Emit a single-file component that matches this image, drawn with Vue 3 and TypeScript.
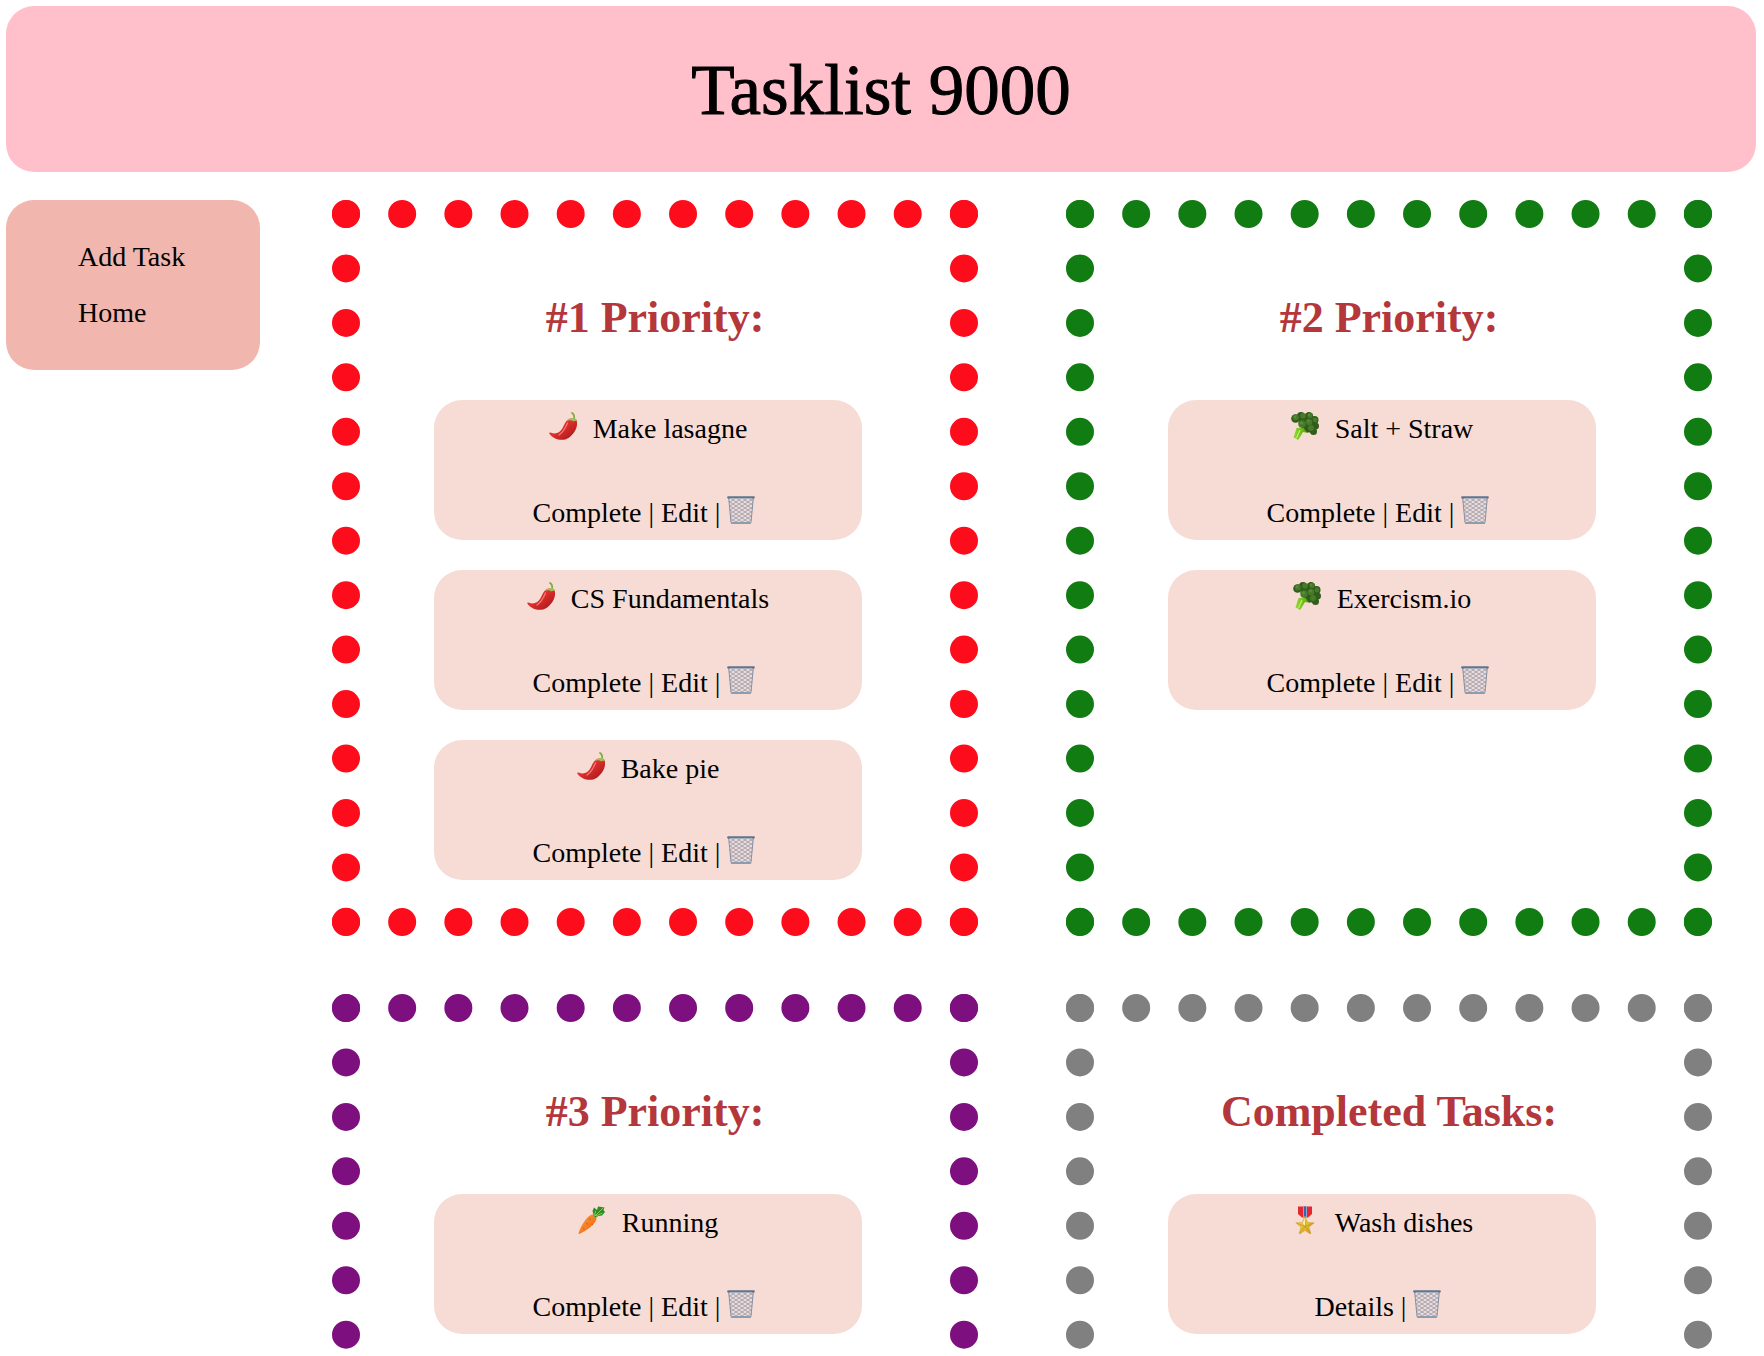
<script setup lang="ts">
interface Task {
  id: number
  name: string
}

interface Section {
  key: string
  title: string
  icon: string
  actions: string[]
  tasks: Task[]
}

const sections: Section[] = [
  {
    key: 'first',
    title: '#1 Priority:',
    icon: 'pepper',
    actions: ['Complete', 'Edit'],
    tasks: [
      { id: 1, name: 'Make lasagne' },
      { id: 2, name: 'CS Fundamentals' },
      { id: 3, name: 'Bake pie' },
    ],
  },
  {
    key: 'second',
    title: '#2 Priority:',
    icon: 'broccoli',
    actions: ['Complete', 'Edit'],
    tasks: [
      { id: 4, name: 'Salt + Straw' },
      { id: 5, name: 'Exercism.io' },
    ],
  },
  {
    key: 'third',
    title: '#3 Priority:',
    icon: 'carrot',
    actions: ['Complete', 'Edit'],
    tasks: [{ id: 6, name: 'Running' }],
  },
  {
    key: 'completed',
    title: 'Completed Tasks:',
    icon: 'medal',
    actions: ['Details'],
    tasks: [{ id: 7, name: 'Wash dishes' }],
  },
]
</script>

<template>
  <div class="page">
    <svg class="sprite" width="0" height="0" aria-hidden="true">
      <defs>
        <linearGradient id="pepper-skin" x1="0" y1="0" x2="1" y2="1">
          <stop offset="0" stop-color="#f0524a" />
          <stop offset="0.5" stop-color="#d92b2b" />
          <stop offset="1" stop-color="#9c1518" />
        </linearGradient>
        <linearGradient id="carrot-skin" x1="0" y1="0" x2="1" y2="1">
          <stop offset="0" stop-color="#ff9a3c" />
          <stop offset="0.6" stop-color="#f47a20" />
          <stop offset="1" stop-color="#d95a10" />
        </linearGradient>
        <linearGradient id="stalk" x1="0" y1="0" x2="1" y2="0">
          <stop offset="0" stop-color="#8fdc2e" />
          <stop offset="1" stop-color="#4f9c12" />
        </linearGradient>
        <linearGradient id="gold" x1="0" y1="0" x2="1" y2="1">
          <stop offset="0" stop-color="#ffe14d" />
          <stop offset="1" stop-color="#cf9a1e" />
        </linearGradient>
        <pattern id="mesh" width="6" height="4" patternUnits="userSpaceOnUse">
          <path d="M0 0L6 4M6 0L0 4" stroke="#8f8d96" stroke-width="0.7" fill="none" />
        </pattern>

        <symbol id="icon-pepper" viewBox="0 0 28 28">
          <path d="M25 8C25.500 5 26 2.500 23 1" fill="none" stroke="#84a847" stroke-width="1.700" stroke-linecap="round" />
          <path d="M18.500 8C20 6 26 5.500 28 8.500C29 15 25.500 22 19.500 26C14 29.500 4.500 28 0.300 21.500C0 20.500 0.700 20.200 1.500 20.500C6.500 22.500 10.500 21 13 17C15.200 13.500 15.500 10.500 18.500 8Z" fill="url(#pepper-skin)" />
          <path d="M18 9C19 6.500 22 5.500 24.500 6C26.500 6 28 7.500 28 9.500C26.500 8.500 25.500 8.500 24.500 9.500C22.500 8 20 8 18 9Z" fill="#a3bd5c" />
          <path d="M18.500 11C16.500 16 14.500 20 10 23" fill="none" stroke="#ff9b92" stroke-width="1.300" stroke-linecap="round" opacity="0.7" />
        </symbol>

        <symbol id="icon-broccoli" viewBox="0 0 28 28">
          <path d="M5.500 16L2.500 25.500L5 26.500L7 28L9 25L12 20L17 21L18 15Z" fill="url(#stalk)" />
          <path d="M9 18L5.500 26" stroke="#c0ee60" stroke-width="1.200" />
          <g fill="#315c1c">
            <circle cx="4.500" cy="6.500" r="4.300" />
            <circle cx="10" cy="4" r="4" />
            <circle cx="18" cy="4.200" r="4.200" />
            <circle cx="23.500" cy="8" r="4" />
            <circle cx="24.500" cy="14" r="3.500" />
            <circle cx="22.500" cy="19.500" r="3.500" />
            <circle cx="14" cy="10" r="6.500" />
            <circle cx="18.500" cy="15" r="5.500" />
          </g>
          <g fill="#477a29">
            <circle cx="4.800" cy="5.500" r="3" />
            <circle cx="12" cy="3.800" r="2.800" />
            <circle cx="19" cy="3.500" r="2.600" />
            <circle cx="11" cy="12" r="3.700" />
            <circle cx="18" cy="10" r="3.200" />
            <circle cx="24" cy="8" r="2.400" />
            <circle cx="20" cy="16" r="3" />
          </g>
          <g fill="#5b8f36">
            <circle cx="4" cy="4.800" r="1.200" />
            <circle cx="10.500" cy="11" r="1.500" />
            <circle cx="17.500" cy="9" r="1.200" />
            <circle cx="18" cy="2.800" r="1.100" />
          </g>
        </symbol>

        <symbol id="icon-carrot" viewBox="0 0 28 28">
          <path d="M14 8.500C16.500 8 19 10.500 18.500 13C17 19 7.500 25 1.500 28C0.800 28.200 0.300 27.600 0.600 27C3 20 8.500 10 14 8.500Z" fill="url(#carrot-skin)" />
          <path d="M11 12L13 14M8 17L10 18.500M13.500 18L15 19M5 22L6.500 23" stroke="#cf5a12" stroke-width="0.900" />
          <path d="M16 10.500L14.500 5L16 1.500L19 4L20 0.500L26.500 1.500L25.500 4L27 6L24 9.500L20.500 10L17.500 11.500Z" fill="#2f8a2c" />
          <path d="M16.500 10.500L17.500 5M17 10L25 2M18 10L24.500 7" stroke="#83cf50" stroke-width="1" fill="none" />
        </symbol>

        <symbol id="icon-medal" viewBox="0 0 28 28">
          <path d="M7 0.500H21V8L17 11.500H11L7 8Z" fill="#e5282e" />
          <path d="M12 0.500H16V11.500H12Z" fill="#a9b4d8" />
          <path d="M12.800 0.500H15.200V11.500H12.800Z" fill="#3c62ae" />
          <path d="M14 10L16.600 16.600L23.200 16.800L18 21.200L20 28.500L14 24.400L8 28.500L10 21.200L4.800 16.800L11.400 16.600Z" fill="url(#gold)" stroke="#c79a24" stroke-width="0.500" />
          <path d="M14 14V20.500L19.500 27M14 20.500L8.500 27M14 20.500L6 17.200M14 20.500L22 17.200" stroke="#b68a18" stroke-width="0.600" fill="none" />
          <path d="M14 12V20L11.800 17Z" fill="#fff2a0" />
        </symbol>

        <symbol id="icon-trash" viewBox="0 0 28 28">
          <path d="M1.500 2H26.500L24 26.500Q23.800 28 22 28H6Q4.200 28 4 26.500Z" fill="#eadcdc" />
          <path d="M1.500 2H26.500L24 26.500Q23.800 28 22 28H6Q4.200 28 4 26.500Z" fill="url(#mesh)" />
          <path d="M1.700 2L4 26.500M26.300 2L24 26.500" stroke="#8791a2" stroke-width="1" />
          <path d="M4.800 27H23.200" stroke="#8c9db0" stroke-width="2" stroke-linecap="round" />
          <path d="M1.200 1.400H26.800" stroke="#62738a" stroke-width="2.200" stroke-linecap="round" />
          <path d="M3 2.500H25" stroke="#adbac9" stroke-width="0.800" />
        </symbol>
      </defs>
    </svg>

    <header class="banner">
      <h1>Tasklist 9000</h1>
    </header>

    <div class="content">
      <nav class="menu">
        <a href="#add">Add Task</a>
        <a href="#home">Home</a>
      </nav>

      <main class="board">
        <section v-for="section in sections" :key="section.key" class="section" :class="section.key">
          <h2>{{ section.title }}</h2>
          <ul class="tasks">
            <li v-for="task in section.tasks" :key="task.id" class="task">
              <div class="name">
                <svg class="icon" aria-hidden="true"><use :href="'#icon-' + section.icon" /></svg>
                <a :href="'#task-' + task.id">{{ task.name }}</a>
              </div>
              <div class="actions">
                <template v-for="action in section.actions" :key="action">
                  <a :href="'#' + action.toLowerCase() + '-' + task.id">{{ action }}</a>
                  <span>|</span>
                </template>
                <button type="button" class="delete" aria-label="Delete">
                  <svg class="icon" aria-hidden="true"><use href="#icon-trash" /></svg>
                </button>
              </div>
            </li>
          </ul>
        </section>
      </main>
    </div>
  </div>
</template>

<style>
body {
  margin: 0;
  background: #fff;
}
</style>

<style scoped>
.page {
  padding: 6px 8px 28px 6px;
  font-family: "Liberation Serif", serif;
  font-size: 28px;
  line-height: 32px;
  color: #000;
}

.sprite {
  position: absolute;
}

a {
  color: inherit;
  text-decoration: none;
}

.banner {
  display: flex;
  align-items: center;
  justify-content: center;
  box-sizing: border-box;
  height: 166px;
  padding-top: 2px;
  border-radius: 28px;
  background: #ffc0cb;
}

h1 {
  margin: 0;
  font-size: 71px;
  line-height: 80px;
  font-weight: 400;
  -webkit-text-stroke: 1px #000;
}

.content {
  display: flex;
  align-items: flex-start;
  gap: 72px;
  margin-top: 28px;
  padding-right: 44px;
}

.menu {
  display: flex;
  flex-direction: column;
  gap: 24px;
  box-sizing: border-box;
  width: 254px;
  padding: 41px 28px 41px 72px;
  border-radius: 28px;
  background: #f1b6ae;
}

.board {
  display: grid;
  flex: 1;
  grid-template-columns: 1fr 1fr;
  grid-auto-rows: 1fr;
  gap: 58px 88px;
}

.section {
  padding: 62px 0 28px;
  border: 28px dotted;
}

.first {
  border-color: #fd0d1b;
}

.second {
  border-color: #107c12;
}

.third {
  border-color: #7d0f7e;
}

.completed {
  border-color: #808080;
}

h2 {
  margin: 0 0 54px;
  font-size: 44px;
  line-height: 56px;
  font-weight: 700;
  text-align: center;
  color: #b3373b;
}

.tasks {
  display: flex;
  flex-direction: column;
  gap: 30px;
  margin: 0 88px 0 74px;
  padding: 0;
  list-style: none;
}

.task {
  display: flex;
  flex-direction: column;
  gap: 50px;
  padding: 12px 0 10px;
  border-radius: 28px;
  line-height: 34px;
  background: #f7dcd5;
}

.name,
.actions {
  display: flex;
  align-items: flex-start;
  justify-content: center;
}

.name {
  gap: 16px;
}

.actions {
  gap: 7px;
}

.icon {
  display: block;
  width: 28px;
  height: 28px;
  overflow: visible;
}

.delete {
  padding: 0 8px 0 0;
  border: 0;
  background: none;
  cursor: pointer;
}
</style>
